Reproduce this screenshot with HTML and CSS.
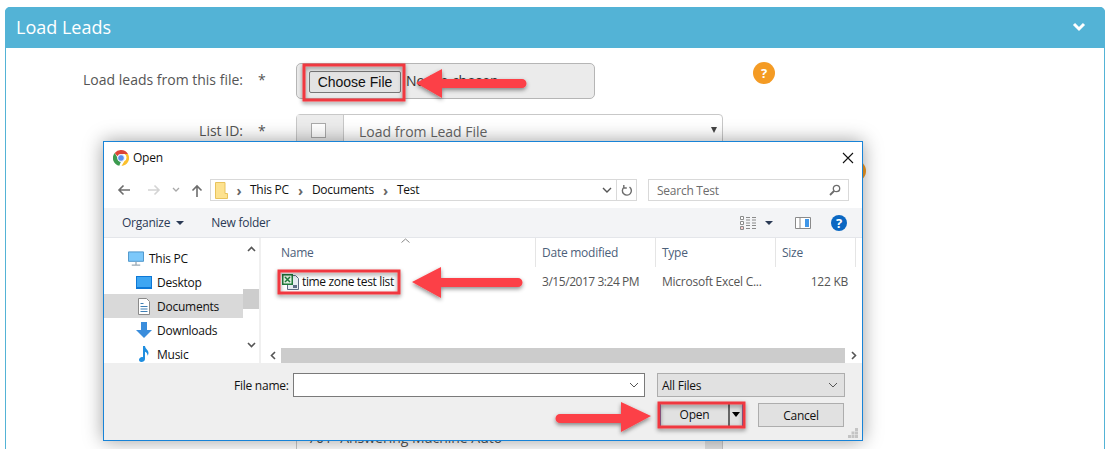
FILE: index.html
```html
<!DOCTYPE html>
<html lang="en">
<head>
<meta charset="utf-8">
<title>Load Leads</title>
<link rel="stylesheet" href="styles.css">
</head>
<body>
<section class="panel">
  <header class="panel-head">
    <h1 class="panel-title">Load Leads</h1>
    <svg class="chevron" width="14" height="10" viewBox="0 0 14 10"><path d="M2 2l5 5 5-5" fill="none" stroke="#fff" stroke-width="3"/></svg>
  </header>
  <div class="panel-body">
    <div class="row row-file">
      <label class="row-label">Load leads from this file:</label>
      <span class="row-star">*</span>
      <div class="file-field">
        <button class="file-btn" type="button">Choose File</button>
        <span class="file-none">No file chosen</span>
      </div>
      <span class="help help-first">?</span>
    </div>
    <div class="row row-list">
      <label class="row-label">List ID:</label>
      <span class="row-star">*</span>
      <div class="select">
        <span class="select-check"><span class="checkbox"></span></span>
        <span class="select-text">Load from Lead File</span>
        <span class="select-caret"></span>
      </div>
    </div>
    <div class="row row-help">
      <span class="help help-second">?</span>
    </div>
    <div class="row row-last">
      <div class="select-last">
        <span class="select-last-text">701- Answering Machine Auto</span>
        <span class="select-last-cell"></span>
      </div>
    </div>
  </div>
</section>

<div class="dialog">
  <div class="dlg-title">
    <svg class="chrome" width="16" height="16" viewBox="0 0 16 16">
      <path d="M8 0a8 8 0 0 1 7 4H8a4 4 0 0 0-3.6 2.2L1.7 2.9A8 8 0 0 1 8 0z" fill="#dc4437"/>
      <path d="M15 4a8 8 0 0 1-6.500 12l3-5a4 4 0 0 0 0-7z" fill="#fbc02d"/>
      <path d="M1.700 2.900l3 5A4 4 0 0 0 8 12l-.2.100-1.500 3.700A8 8 0 0 1 1.700 2.900z" fill="#3c9a4e"/>
      <circle cx="8" cy="8" r="3.400" fill="#5c8ff0" stroke="#fff" stroke-width=".9"/>
    </svg>
    <span class="dlg-name">Open</span>
    <svg class="dlg-close" width="12" height="12" viewBox="0 0 12 12"><path d="M1 1l10 10M11 1L1 11" stroke="#111" stroke-width="1.100"/></svg>
  </div>
  <div class="dlg-nav">
    <svg class="nav-icon" width="14" height="12" viewBox="0 0 14 12"><path d="M13 6H2M6.500 1.500L2 6l4.500 4.500" fill="none" stroke="#6d6d6d" stroke-width="1.600"/></svg>
    <svg class="nav-icon nav-fwd" width="14" height="12" viewBox="0 0 14 12"><path d="M1 6h11M7.500 1.500L12 6l-4.500 4.500" fill="none" stroke="#d4d4d4" stroke-width="1.600"/></svg>
    <svg class="nav-icon nav-down" width="8" height="6" viewBox="0 0 8 6"><path d="M1 1l3 3 3-3" fill="none" stroke="#a8a8a8" stroke-width="1.300"/></svg>
    <svg class="nav-icon nav-up" width="12" height="13" viewBox="0 0 12 13"><path d="M6 13V2M1.500 6.500L6 2l4.500 4.500" fill="none" stroke="#6d6d6d" stroke-width="1.600"/></svg>
    <div class="address">
      <svg class="folder" width="13" height="17" viewBox="0 0 13 17"><path d="M.5.500h9.500v11h2.500v5H.5z" fill="#fde28f" stroke="#e8c35c"/></svg>
      <span class="crumb-sep">&rsaquo;</span><span class="crumb">This PC</span>
      <span class="crumb-sep">&rsaquo;</span><span class="crumb">Documents</span>
      <span class="crumb-sep">&rsaquo;</span><span class="crumb">Test</span>
      <svg class="addr-down" width="10" height="7" viewBox="0 0 10 7"><path d="M1 1l4 4 4-4" fill="none" stroke="#555" stroke-width="1.400"/></svg>
      <span class="addr-refresh">
        <svg width="12" height="13" viewBox="0 0 12 13"><path d="M3 3.200a4.500 4.500 0 1 0 5.500-.2M2.800 1v3h3" fill="none" stroke="#6d6d6d" stroke-width="1.400"/></svg>
      </span>
    </div>
    <div class="search">
      <span class="search-text">Search Test</span>
      <svg width="12" height="12" viewBox="0 0 12 12"><circle cx="7.500" cy="4.500" r="3.200" fill="none" stroke="#6d6d6d" stroke-width="1.300"/><path d="M5 7l-4 4" stroke="#6d6d6d" stroke-width="1.800"/></svg>
    </div>
  </div>
  <div class="dlg-tools">
    <span class="tool tool-org">Organize</span>
    <span class="tool-caret"></span>
    <span class="tool tool-new">New folder</span>
    <svg class="tool-view" width="17" height="14" viewBox="0 0 17 14">
      <path d="M.5 .5h3v3h-3zM.5 5.500h3v3h-3zM.5 10.500h3v3h-3z" fill="#fff" stroke="#8a8a8a"/>
      <path d="M1.500 11.500h1v1h-1z" fill="#d33"/>
      <path d="M6 1.500h4M12 1.500h4M6 4h4M12 4h4M6 7h4M12 7h4M6 9.500h4M12 9.500h4M6 12.500h4M12 12.500h4" stroke="#8a8a8a"/>
    </svg>
    <span class="tool-caret tool-caret-view"></span>
    <svg class="tool-pane" width="16" height="12" viewBox="0 0 16 12"><path d="M.5.500h15v11H.5z" fill="#fff" stroke="#8a8a8a"/><path d="M10 2h4v8h-4z" fill="#3f96e8"/><path d="M5 1v10" stroke="#8a8a8a"/></svg>
    <span class="tool-help">?</span>
  </div>
  <div class="dlg-main">
    <nav class="tree">
      <div class="tree-list">
        <div class="tree-item tree-root">
          <svg width="17" height="15" viewBox="0 0 17 15"><path d="M.5.500h16v10H.5z" fill="#7cc8fa" stroke="#4b93c9"/><path d="M4 14.500h9M8.500 11v3" stroke="#9aa9b5" stroke-width="1.400"/></svg>
          <span>This PC</span>
        </div>
        <div class="tree-item">
          <svg width="16" height="13" viewBox="0 0 16 13"><path d="M0 0h16v13H0z" fill="#0d78d6"/><path d="M1 1h14v10H1z" fill="#3ea6f2"/></svg>
          <span>Desktop</span>
        </div>
        <div class="tree-item tree-sel">
          <svg width="16" height="17" viewBox="0 0 16 17"><path d="M2.500.500h8l3 3v13h-11z" fill="#fff" stroke="#8a8a8a"/><path d="M4.500 5.500h3M4.500 8.500h7M4.500 11h7M4.500 13.500h7" stroke="#3f7fb5"/></svg>
          <span>Documents</span>
        </div>
        <div class="tree-item">
          <svg width="16" height="16" viewBox="0 0 16 16"><path d="M5 0h6v8h5l-8 8-8-8h5z" fill="#3a8ddc"/></svg>
          <span>Downloads</span>
        </div>
        <div class="tree-item">
          <svg width="16" height="16" viewBox="0 0 16 16"><path d="M7 0h2c.3 3 3.500 4 3.500 7 0 1-.4 2-1 2.800.2-2.300-1.300-3.500-2.500-4V13c0 1.700-1.800 3-3.600 3S3 15 3 13.800 4.500 11 6 11c.4 0 .7 0 1 .2z" fill="#1f8ee0"/></svg>
          <span>Music</span>
        </div>
      </div>
      <div class="vscroll">
        <svg width="9" height="6" viewBox="0 0 9 6"><path d="M1 5l3.500-3.500L8 5" fill="none" stroke="#555" stroke-width="1.600"/></svg>
        <span class="vthumb"></span>
        <svg width="9" height="6" viewBox="0 0 9 6"><path d="M1 1l3.500 3.500L8 1" fill="none" stroke="#555" stroke-width="1.600"/></svg>
      </div>
    </nav>
    <div class="files">
      <svg class="sort-caret" width="9" height="5" viewBox="0 0 9 5"><path d="M.5 4.500l4-3.500 4 3.500" fill="none" stroke="#8a8a8a"/></svg>
      <div class="cols cols-head">
        <span class="col col-name">Name</span>
        <span class="col">Date modified</span>
        <span class="col">Type</span>
        <span class="col">Size</span>
      </div>
      <div class="cols file-row">
        <span class="file-name">
          <svg width="17" height="16" viewBox="0 0 17 16"><path d="M5.500 1.500h8l3 3v11h-11z" fill="#e6edf2" stroke="#5c6e85"/><path d="M0 0h11v11H0z" fill="#1f7a3b"/><path d="M1.500 1.500h8v8h-8z" fill="#dff0e0"/><path d="M3 3l5 5M8 3L3 8" stroke="#1f7a3b" stroke-width="1.500"/><path d="M11 11h4v3h-4z" fill="#5c6e85"/></svg>
          <span>time zone test list</span>
        </span>
        <span class="file-cell file-date">3/15/2017 3:24 PM</span>
        <span class="file-cell">Microsoft Excel C...</span>
        <span class="file-cell file-size">122 KB</span>
      </div>
      <div class="hscroll">
        <span class="hbtn"><svg width="6" height="9" viewBox="0 0 6 9"><path d="M5 1L1.500 4.500 5 8" fill="none" stroke="#555" stroke-width="1.600"/></svg></span>
        <span class="htrack"></span>
        <span class="hbtn"><svg width="6" height="9" viewBox="0 0 6 9"><path d="M1 1l3.500 3.500L1 8" fill="none" stroke="#555" stroke-width="1.600"/></svg></span>
      </div>
    </div>
  </div>
  <div class="dlg-foot">
    <div class="foot-row">
      <label class="foot-label">File name:</label>
      <div class="name-input">
        <svg width="10" height="6" viewBox="0 0 10 6"><path d="M1 1l4 4 4-4" fill="none" stroke="#555"/></svg>
      </div>
      <div class="type-select">
        <span>All Files</span>
        <svg width="10" height="6" viewBox="0 0 10 6"><path d="M1 1l4 4 4-4" fill="none" stroke="#555"/></svg>
      </div>
    </div>
    <div class="foot-row foot-actions">
      <div class="open-btn"><span class="open-text">Open</span><span class="open-drop"></span></div>
      <button class="cancel-btn" type="button">Cancel</button>
    </div>
    <svg class="grip" width="10" height="10" viewBox="0 0 10 10"><path d="M7 0h3v3H7zM3.500 3.500h3v3h-3zM7 3.500h3v3H7zM0 7h3v3H0zM3.500 7h3v3h-3zM7 7h3v3H7z" fill="#c4c4c4"/></svg>
  </div>
</div>

<svg class="marks" width="1115" height="449" viewBox="0 0 1115 449">
  <defs>
    <filter id="ds" x="-20%" y="-30%" width="140%" height="170%">
      <feDropShadow dx="0" dy="2" stdDeviation="2" flood-color="#000" flood-opacity=".45"/>
    </filter>
  </defs>
  <g filter="url(#ds)">
    <rect x="304" y="65" width="100" height="35" fill="none" stroke="#f0393f" stroke-width="3"/>
    <path d="M416 83l26-14v10h80a4.500 4.500 0 0 1 0 9h-80v10z" fill="#fc4047"/>
  </g>
  <g filter="url(#ds)">
    <rect x="279" y="271" width="120" height="22" fill="none" stroke="#f0393f" stroke-width="3"/>
    <path d="M412 282l29-15v11h77a4.500 4.500 0 0 1 0 9h-77v11z" fill="#fc4047"/>
  </g>
  <g filter="url(#ds)">
    <rect x="659" y="403" width="85" height="24" fill="none" stroke="#f0393f" stroke-width="3"/>
    <path d="M651 416l-30-14v12h-61a4.500 4.500 0 0 0 0 9h61v9z" fill="#fc4047"/>
  </g>
</svg>
</body>
</html>
```
FILE: styles.css
```css
* { box-sizing: border-box; }
html, body { margin: 0; padding: 0; }
body {
  position: relative;
  width: 1115px;
  height: 449px;
  overflow: hidden;
  background: #fff;
  font-family: "Open Sans", "Liberation Sans", sans-serif;
  color: #555;
}

/* Page panel */
.panel {
  margin: 7px 10px 0 5px;
  height: 460px;
  border: 1px solid #53b3d6;
  border-radius: 5px 5px 0 0;
}
.panel-head {
  margin: -1px -1px 0;
  height: 41px;
  padding: 0 19px 2px 11px;
  display: flex;
  align-items: center;
  justify-content: space-between;
  background: #53b3d6;
  border-radius: 5px 5px 0 0;
}
.panel-title { margin: 0; font-size: 18px; font-weight: 400; color: #fff; }
.panel-body { padding-top: 15px; }
.row { display: flex; align-items: flex-start; }
.row-label { width: 237px; text-align: right; font-size: 14px; line-height: 34px; color: #555; }
.row-star { width: 53px; padding-left: 15px; font-size: 14px; line-height: 34px; }
.row-list { margin-top: 15px; }
.file-field {
  width: 299px;
  height: 36px;
  padding: 7px 0 0 12px;
  display: flex;
  align-items: flex-start;
  background: #ebebeb;
  border: 1px solid #b5b5b5;
  border-radius: 5px;
}
.file-btn {
  width: 92px;
  height: 22px;
  padding: 0;
  font: 14px "Liberation Sans", sans-serif;
  color: #111;
  background: #e3e3e3;
  border: 1px solid #777;
  border-radius: 2px;
}
.file-none { margin-left: 5px; font-size: 14px; line-height: 20px; color: #333; }
.help {
  width: 22px;
  height: 22px;
  display: flex;
  align-items: center;
  justify-content: center;
  border-radius: 50%;
  background: #f49b24;
  color: #fff;
  font-size: 13px;
  font-weight: 700;
}
.help-first { margin: -1px 0 0 158px; }
.row-help { margin: 10px 0 0 838px; }
.select {
  width: 427px;
  height: 36px;
  display: flex;
  border: 1px solid #c8c8c8;
  border-radius: 4px;
  position: relative;
}
.select-check {
  width: 47px;
  padding: 8px 0 0 14px;
  background: #ececec;
  border-right: 1px solid #c8c8c8;
}
.checkbox { display: block; width: 15px; height: 15px; background: #fff; border: 1px solid #aaa; }
.select-text { padding-left: 15px; font-size: 14px; line-height: 34px; color: #666; }
.select-caret {
  position: absolute;
  right: 5px;
  top: 12px;
  border: 3px solid transparent;
  border-top: 6px solid #444;
  border-bottom: 0;
}
.row-last { margin: 241px 0 0 290px; }
.select-last {
  width: 427px;
  height: 36px;
  display: flex;
  justify-content: space-between;
  border: 1px solid #c8c8c8;
  border-radius: 4px;
}
.select-last-text { padding-left: 11px; font-size: 14px; line-height: 27px; color: #555; }
.select-last-cell { width: 17px; background: #e4e4e4; }

/* File dialog */
.dialog {
  position: absolute;
  left: 103px;
  top: 141px;
  width: 760px;
  height: 300px;
  display: flex;
  flex-direction: column;
  background: #fff;
  border: 1px solid #1883d7;
  box-shadow: 0 0 18px rgba(0, 0, 0, .38);
  font-family: "Open Sans", "Liberation Sans", sans-serif;
  font-size: 12px;
  letter-spacing: -.25px;
  color: #111;
}
.dlg-title { height: 33px; display: flex; align-items: center; padding: 0 9px 2px 9px; }
.dlg-name { margin-left: 4px; }
.dlg-close { margin-left: auto; margin-right: -1px; }
.dlg-nav { height: 33px; display: flex; align-items: center; padding: 0 13px 3px 13px; }
.nav-fwd { margin-left: 16px; }
.nav-down { margin-left: 11px; }
.nav-up { margin-left: 11px; }
.address {
  width: 427px;
  height: 22px;
  margin-left: 7px;
  display: flex;
  align-items: center;
  padding-left: 4px;
  border: 1px solid #d9d9d9;
}
.crumb { margin-top: -2px; }
.crumb-sep { width: 23px; text-align: center; font-size: 14px; font-weight: 700; color: #666; }
.crumb-sep:first-of-type { width: 22px; }
.addr-down { margin-left: auto; margin-right: 4px; }
.addr-refresh {
  width: 20px;
  height: 20px;
  display: flex;
  align-items: center;
  justify-content: center;
  border-left: 1px solid #d9d9d9;
}
.search {
  width: 201px;
  height: 22px;
  margin-left: 11px;
  padding: 0 7px 0 8px;
  display: flex;
  align-items: center;
  justify-content: space-between;
  border: 1px solid #d9d9d9;
}
.search-text { color: #6d6d6d; }
.dlg-tools {
  height: 30px;
  display: flex;
  align-items: center;
  padding: 0 15px 0 18px;
  background: #f3f4f6;
  border-bottom: 1px solid #e4e6ea;
  color: #2b3a55;
}
.tool-caret { margin-left: 6px; border: 4px solid transparent; border-top: 4px solid #2b3a55; border-bottom: 0; }
.tool-new { margin-left: 27px; }
.tool-view { margin-left: auto; }
.tool-caret-view { margin-left: 8px; }
.tool-pane { margin-left: 22px; }
.tool-help {
  width: 16px;
  height: 16px;
  margin-left: 20px;
  display: flex;
  align-items: center;
  justify-content: center;
  border-radius: 50%;
  background: #0a67c2;
  color: #fff;
  font-size: 13px;
  font-weight: 700;
}
.dlg-main { height: 125px; display: flex; }
.tree { width: 157px; display: flex; border-right: 2px solid #f0f0f0; }
.tree-list { width: 139px; padding-top: 8px; }
.tree-item { height: 24px; display: flex; align-items: center; padding-left: 32px; }
.tree-item svg { width: 16px; margin-right: 5px; flex: none; }
.tree-root { padding-left: 24px; }
.tree-sel { background: #d9d9d9; }
.vscroll {
  width: 16px;
  display: flex;
  flex-direction: column;
  align-items: center;
  padding-top: 8px;
  background: #fff;
}
.vthumb { width: 16px; height: 20px; margin-top: 37px; background: #cdcdcd; }
.vscroll svg:last-child { margin-top: 33px; }
.files { flex: 1; display: flex; flex-direction: column; position: relative; }
.sort-caret { position: absolute; left: 140px; top: 0; }
.cols { display: grid; grid-template-columns: 275px 120px 120px 80px; }
.cols-head { height: 25px; }
.col { padding-left: 6px; line-height: 29px; color: #4c607a; border-right: 1px solid #e5e5e5; }
.col-name { padding-left: 20px; }
.file-row { margin-top: 7px; height: 23px; align-items: center; }
.file-name { display: flex; align-items: center; padding-left: 21px; letter-spacing: -.35px; }
.file-name svg { margin-right: 3px; }
.file-cell { padding-left: 6px; color: #555; }
.file-date { letter-spacing: -.45px; }
.file-size { text-align: right; padding-right: 8px; }
.hscroll { margin: auto 0 0 3px; height: 15px; display: flex; }
.hbtn { width: 17px; display: flex; align-items: center; justify-content: center; }
.htrack { flex: 1; background: #cccccc; }
.dlg-foot { flex: 1; position: relative; padding: 10px 0 0 130px; background: #efefef; }
.foot-row { display: flex; align-items: center; }
.foot-label { flex: none; width: 59px; white-space: nowrap; color: #111; }
.name-input {
  flex: none;
  width: 352px;
  height: 24px;
  padding-right: 5px;
  display: flex;
  align-items: center;
  justify-content: flex-end;
  background: #fff;
  border: 1px solid #7a7a7a;
}
.type-select {
  flex: none;
  width: 188px;
  height: 24px;
  margin-left: 12px;
  padding: 0 6px 0 4px;
  display: flex;
  align-items: center;
  justify-content: space-between;
  background: #e1e1e1;
  border: 1px solid #adadad;
}
.foot-actions { margin-top: 6px; padding-left: 426px; }
.open-btn {
  flex: none;
  width: 83px;
  height: 24px;
  display: flex;
  background: #e1e1e1;
  border: 1px solid #0078d7;
}
.open-text { flex: 1; text-align: center; line-height: 22px; }
.open-drop {
  width: 14px;
  position: relative;
  border-left: 2px solid #666;
}
.open-drop::after {
  content: "";
  position: absolute;
  left: 2px;
  top: 8px;
  border: 4.5px solid transparent;
  border-top: 5px solid #000;
  border-bottom: 0;
}
.cancel-btn {
  flex: none;
  width: 86px;
  height: 24px;
  margin-left: 15px;
  padding: 0;
  font: 12px "Open Sans", "Liberation Sans", sans-serif;
  letter-spacing: -.25px;
  color: #111;
  background: #e1e1e1;
  border: 1px solid #adadad;
}
.grip { position: absolute; right: 4px; bottom: 2px; }

/* Annotations laid over the screenshot */
.marks { position: absolute; left: 0; top: 0; pointer-events: none; }
```
